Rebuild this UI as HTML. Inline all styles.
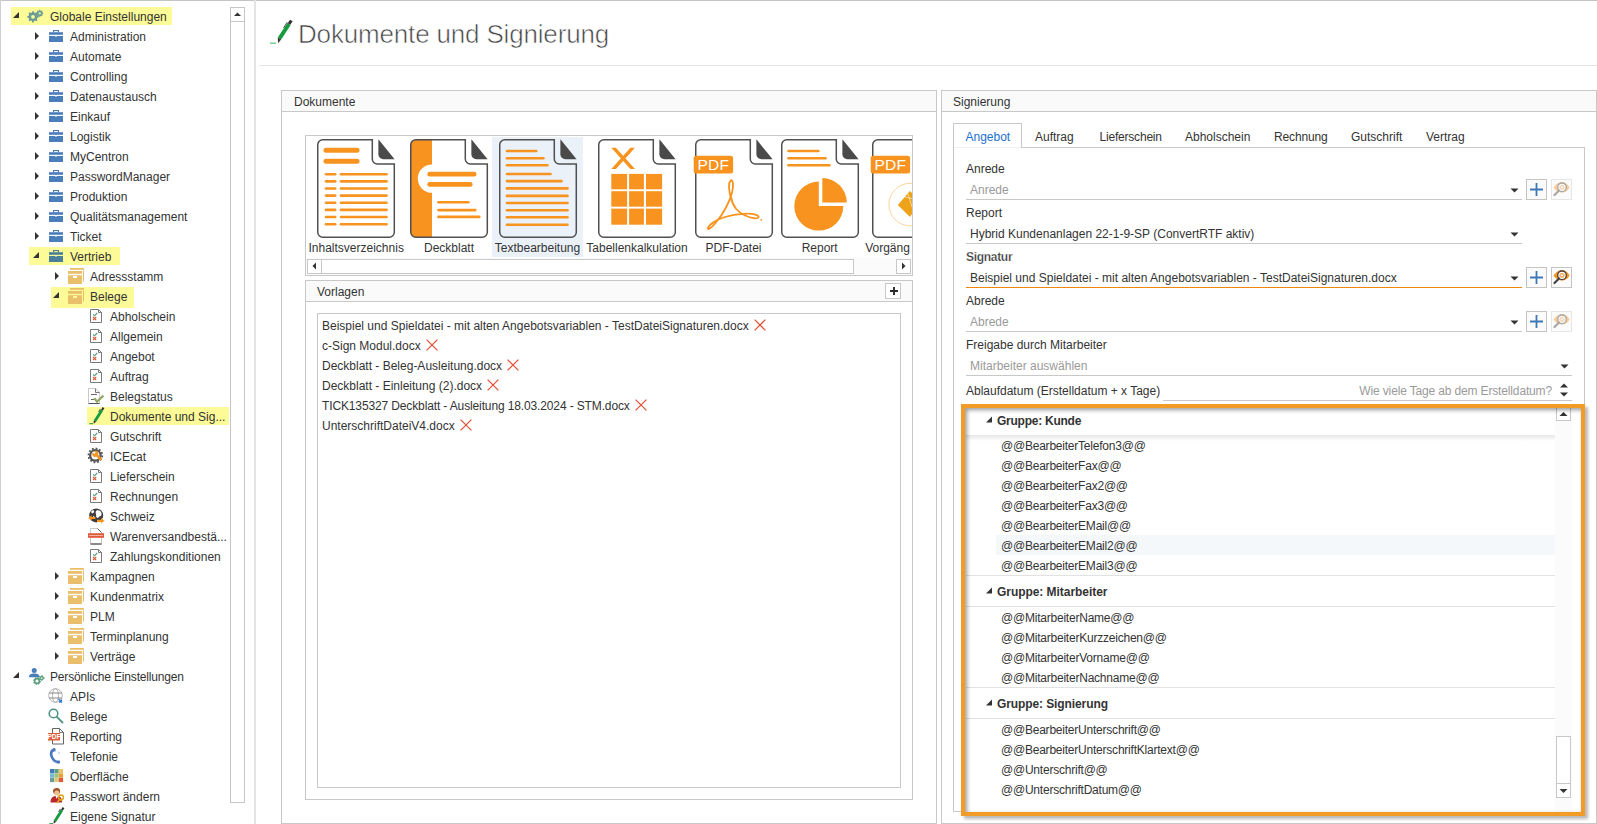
<!DOCTYPE html>
<html><head><meta charset="utf-8"><title>Dokumente und Signierung</title>
<style>
html,body{margin:0;padding:0;background:#fff;}
body{width:1597px;height:824px;overflow:hidden;position:relative;font-family:"Liberation Sans",sans-serif;}
.a{position:absolute;box-sizing:border-box;}
.t{position:absolute;white-space:pre;font-family:"Liberation Sans",sans-serif;}
svg.a{overflow:visible;}
</style></head><body>

<div class="a" style="left:0px;top:0px;width:1597px;height:1px;background:#c4c4c4"></div>
<div class="a" style="left:0px;top:0px;width:1px;height:824px;background:#cfcfcf"></div>
<div class="a" style="left:11px;top:7px;width:161px;height:18px;background:#fdfb97"></div>
<div class="a" style="left:29px;top:247px;width:91px;height:18px;background:#fdfb97"></div>
<div class="a" style="left:51px;top:287px;width:83px;height:21px;background:#fdfb97"></div>
<div class="a" style="left:87px;top:407px;width:142px;height:18px;background:#fdfb97"></div>
<div class="t " style="left:50px;top:10px;font-size:12px;line-height:14px;color:#333333;font-weight:normal;">Globale Einstellungen</div>
<svg class="a" style="left:27px;top:8px;" width="17" height="17" viewBox="0 0 17 17"><g fill="#6b9d95">
<path d="M5.3,3.2 L6.7,3.2 L7.1,4.6 L8.2,5.1 L9.5,4.3 L10.5,5.3 L9.8,6.6 L10.3,7.7 L11.7,8.1 L11.7,9.5 L10.3,9.9 L9.8,11 L10.5,12.3 L9.5,13.3 L8.2,12.5 L7.1,13 L6.7,14.4 L5.3,14.4 L4.9,13 L3.8,12.5 L2.5,13.3 L1.5,12.3 L2.2,11 L1.7,9.9 L0.3,9.5 L0.3,8.1 L1.7,7.7 L2.2,6.6 L1.5,5.3 L2.5,4.3 L3.8,5.1 L4.9,4.6 Z M6,6.9 A1.9,1.9 0 1 0 6,10.7 A1.9,1.9 0 1 0 6,6.9 Z" fill-rule="evenodd"/>
<path d="M12.3,1.8 L13.2,1.8 L13.5,2.7 L14.2,3 L15,2.5 L15.6,3.1 L15.2,3.9 L15.5,4.6 L16.3,4.9 L16.3,5.8 L15.5,6.1 L15.2,6.8 L15.6,7.6 L15,8.2 L14.2,7.8 L13.5,8.1 L13.2,8.9 L12.3,8.9 L12,8.1 L11.3,7.8 L10.5,8.2 L9.9,7.6 L10.3,6.8 L10,6.1 L9.2,5.8 L9.2,4.9 L10,4.6 L10.3,3.9 L9.9,3.1 L10.5,2.5 L11.3,3 L12,2.7 Z M12.75,4.2 A1.15,1.15 0 1 0 12.75,6.5 A1.15,1.15 0 1 0 12.75,4.2 Z" fill-rule="evenodd"/>
</g></svg>
<div class="t " style="left:70px;top:30px;font-size:12px;line-height:14px;color:#333333;font-weight:normal;">Administration</div>
<svg class="a" style="left:49px;top:30px;" width="14" height="12" viewBox="0 0 14 12"><g fill="#4a7ebb"><path d="M4,0 H10 V2.2 H8.8 V1.1 H5.2 V2.2 H4 Z"/><rect x="0" y="2.2" width="14" height="2.6"/><path d="M0,6 H6 L7,7 L8,6 H14 V12 H0 Z"/></g></svg>
<div class="t " style="left:70px;top:50px;font-size:12px;line-height:14px;color:#333333;font-weight:normal;">Automate</div>
<svg class="a" style="left:49px;top:50px;" width="14" height="12" viewBox="0 0 14 12"><g fill="#4a7ebb"><path d="M4,0 H10 V2.2 H8.8 V1.1 H5.2 V2.2 H4 Z"/><rect x="0" y="2.2" width="14" height="2.6"/><path d="M0,6 H6 L7,7 L8,6 H14 V12 H0 Z"/></g></svg>
<div class="t " style="left:70px;top:70px;font-size:12px;line-height:14px;color:#333333;font-weight:normal;">Controlling</div>
<svg class="a" style="left:49px;top:70px;" width="14" height="12" viewBox="0 0 14 12"><g fill="#4a7ebb"><path d="M4,0 H10 V2.2 H8.8 V1.1 H5.2 V2.2 H4 Z"/><rect x="0" y="2.2" width="14" height="2.6"/><path d="M0,6 H6 L7,7 L8,6 H14 V12 H0 Z"/></g></svg>
<div class="t " style="left:70px;top:90px;font-size:12px;line-height:14px;color:#333333;font-weight:normal;">Datenaustausch</div>
<svg class="a" style="left:49px;top:90px;" width="14" height="12" viewBox="0 0 14 12"><g fill="#4a7ebb"><path d="M4,0 H10 V2.2 H8.8 V1.1 H5.2 V2.2 H4 Z"/><rect x="0" y="2.2" width="14" height="2.6"/><path d="M0,6 H6 L7,7 L8,6 H14 V12 H0 Z"/></g></svg>
<div class="t " style="left:70px;top:110px;font-size:12px;line-height:14px;color:#333333;font-weight:normal;">Einkauf</div>
<svg class="a" style="left:49px;top:110px;" width="14" height="12" viewBox="0 0 14 12"><g fill="#4a7ebb"><path d="M4,0 H10 V2.2 H8.8 V1.1 H5.2 V2.2 H4 Z"/><rect x="0" y="2.2" width="14" height="2.6"/><path d="M0,6 H6 L7,7 L8,6 H14 V12 H0 Z"/></g></svg>
<div class="t " style="left:70px;top:130px;font-size:12px;line-height:14px;color:#333333;font-weight:normal;">Logistik</div>
<svg class="a" style="left:49px;top:130px;" width="14" height="12" viewBox="0 0 14 12"><g fill="#4a7ebb"><path d="M4,0 H10 V2.2 H8.8 V1.1 H5.2 V2.2 H4 Z"/><rect x="0" y="2.2" width="14" height="2.6"/><path d="M0,6 H6 L7,7 L8,6 H14 V12 H0 Z"/></g></svg>
<div class="t " style="left:70px;top:150px;font-size:12px;line-height:14px;color:#333333;font-weight:normal;">MyCentron</div>
<svg class="a" style="left:49px;top:150px;" width="14" height="12" viewBox="0 0 14 12"><g fill="#4a7ebb"><path d="M4,0 H10 V2.2 H8.8 V1.1 H5.2 V2.2 H4 Z"/><rect x="0" y="2.2" width="14" height="2.6"/><path d="M0,6 H6 L7,7 L8,6 H14 V12 H0 Z"/></g></svg>
<div class="t " style="left:70px;top:170px;font-size:12px;line-height:14px;color:#333333;font-weight:normal;">PasswordManager</div>
<svg class="a" style="left:49px;top:170px;" width="14" height="12" viewBox="0 0 14 12"><g fill="#4a7ebb"><path d="M4,0 H10 V2.2 H8.8 V1.1 H5.2 V2.2 H4 Z"/><rect x="0" y="2.2" width="14" height="2.6"/><path d="M0,6 H6 L7,7 L8,6 H14 V12 H0 Z"/></g></svg>
<div class="t " style="left:70px;top:190px;font-size:12px;line-height:14px;color:#333333;font-weight:normal;">Produktion</div>
<svg class="a" style="left:49px;top:190px;" width="14" height="12" viewBox="0 0 14 12"><g fill="#4a7ebb"><path d="M4,0 H10 V2.2 H8.8 V1.1 H5.2 V2.2 H4 Z"/><rect x="0" y="2.2" width="14" height="2.6"/><path d="M0,6 H6 L7,7 L8,6 H14 V12 H0 Z"/></g></svg>
<div class="t " style="left:70px;top:210px;font-size:12px;line-height:14px;color:#333333;font-weight:normal;">Qualitätsmanagement</div>
<svg class="a" style="left:49px;top:210px;" width="14" height="12" viewBox="0 0 14 12"><g fill="#4a7ebb"><path d="M4,0 H10 V2.2 H8.8 V1.1 H5.2 V2.2 H4 Z"/><rect x="0" y="2.2" width="14" height="2.6"/><path d="M0,6 H6 L7,7 L8,6 H14 V12 H0 Z"/></g></svg>
<div class="t " style="left:70px;top:230px;font-size:12px;line-height:14px;color:#333333;font-weight:normal;">Ticket</div>
<svg class="a" style="left:49px;top:230px;" width="14" height="12" viewBox="0 0 14 12"><g fill="#4a7ebb"><path d="M4,0 H10 V2.2 H8.8 V1.1 H5.2 V2.2 H4 Z"/><rect x="0" y="2.2" width="14" height="2.6"/><path d="M0,6 H6 L7,7 L8,6 H14 V12 H0 Z"/></g></svg>
<div class="t " style="left:70px;top:250px;font-size:12px;line-height:14px;color:#333333;font-weight:normal;">Vertrieb</div>
<svg class="a" style="left:49px;top:250px;" width="14" height="12" viewBox="0 0 14 12"><g fill="#4a7f9c"><path d="M4,0 H10 V2.2 H8.8 V1.1 H5.2 V2.2 H4 Z"/><rect x="0" y="2.2" width="14" height="2.6"/><path d="M0,6 H6 L7,7 L8,6 H14 V12 H0 Z"/></g></svg>
<div class="t " style="left:90px;top:270px;font-size:12px;line-height:14px;color:#333333;font-weight:normal;">Adressstamm</div>
<svg class="a" style="left:68px;top:268px;" width="17" height="17" viewBox="0 0 17 17"><g fill="#e9bf6b"><rect x="2" y="0" width="14" height="1.8"/><rect x="15" y="2.5" width="1" height="11"/><rect x="0" y="3" width="14" height="2.8"/><path d="M0,7.2 H14 V16 H0 Z M5,8.1 V10 H9 V8.1 Z" fill-rule="evenodd"/></g></svg>
<div class="t " style="left:90px;top:290px;font-size:12px;line-height:14px;color:#333333;font-weight:normal;">Belege</div>
<svg class="a" style="left:68px;top:288px;" width="17" height="17" viewBox="0 0 17 17"><g fill="#e9bf6b"><rect x="2" y="0" width="14" height="1.8"/><rect x="15" y="2.5" width="1" height="11"/><rect x="0" y="3" width="14" height="2.8"/><path d="M0,7.2 H14 V16 H0 Z M5,8.1 V10 H9 V8.1 Z" fill-rule="evenodd"/></g></svg>
<div class="t " style="left:110px;top:310px;font-size:12px;line-height:14px;color:#333333;font-weight:normal;">Abholschein</div>
<svg class="a" style="left:90px;top:309px;" width="12" height="14" viewBox="0 0 12 14"><path d="M0.5,0.5 H8.5 L11.5,3.5 V13.5 H0.5 Z" fill="#fff" stroke="#7a7a7a" stroke-width="1"/><path d="M8.5,0.5 V3.5 H11.5" fill="none" stroke="#7a7a7a" stroke-width="1"/>
<path d="M3,5.3 L4.5,6.8 L7.2,4" fill="none" stroke="#4f9a80" stroke-width="1.1"/><path d="M3,8 L6.2,11.2 M6.2,8 L3,11.2" stroke="#df5a3a" stroke-width="1.2"/></svg>
<div class="t " style="left:110px;top:330px;font-size:12px;line-height:14px;color:#333333;font-weight:normal;">Allgemein</div>
<svg class="a" style="left:90px;top:329px;" width="12" height="14" viewBox="0 0 12 14"><path d="M0.5,0.5 H8.5 L11.5,3.5 V13.5 H0.5 Z" fill="#fff" stroke="#7a7a7a" stroke-width="1"/><path d="M8.5,0.5 V3.5 H11.5" fill="none" stroke="#7a7a7a" stroke-width="1"/>
<path d="M3,5.3 L4.5,6.8 L7.2,4" fill="none" stroke="#4f9a80" stroke-width="1.1"/><path d="M3,8 L6.2,11.2 M6.2,8 L3,11.2" stroke="#df5a3a" stroke-width="1.2"/></svg>
<div class="t " style="left:110px;top:350px;font-size:12px;line-height:14px;color:#333333;font-weight:normal;">Angebot</div>
<svg class="a" style="left:90px;top:349px;" width="12" height="14" viewBox="0 0 12 14"><path d="M0.5,0.5 H8.5 L11.5,3.5 V13.5 H0.5 Z" fill="#fff" stroke="#7a7a7a" stroke-width="1"/><path d="M8.5,0.5 V3.5 H11.5" fill="none" stroke="#7a7a7a" stroke-width="1"/>
<path d="M3,5.3 L4.5,6.8 L7.2,4" fill="none" stroke="#4f9a80" stroke-width="1.1"/><path d="M3,8 L6.2,11.2 M6.2,8 L3,11.2" stroke="#df5a3a" stroke-width="1.2"/></svg>
<div class="t " style="left:110px;top:370px;font-size:12px;line-height:14px;color:#333333;font-weight:normal;">Auftrag</div>
<svg class="a" style="left:90px;top:369px;" width="12" height="14" viewBox="0 0 12 14"><path d="M0.5,0.5 H8.5 L11.5,3.5 V13.5 H0.5 Z" fill="#fff" stroke="#7a7a7a" stroke-width="1"/><path d="M8.5,0.5 V3.5 H11.5" fill="none" stroke="#7a7a7a" stroke-width="1"/>
<path d="M3,5.3 L4.5,6.8 L7.2,4" fill="none" stroke="#4f9a80" stroke-width="1.1"/><path d="M3,8 L6.2,11.2 M6.2,8 L3,11.2" stroke="#df5a3a" stroke-width="1.2"/></svg>
<div class="t " style="left:110px;top:390px;font-size:12px;line-height:14px;color:#333333;font-weight:normal;">Belegstatus</div>
<svg class="a" style="left:88px;top:388px;" width="16" height="16" viewBox="0 0 16 16"><path d="M0.5,0.5 H7.5 L11.5,4.5 V15.5 H0.5 Z" fill="#fff" stroke="#c8c8c8" stroke-width="1"/><path d="M7.5,0.5 V4.5 H11.5" fill="none" stroke="#555" stroke-width="0.8"/><path d="M0.5,15.5 H11.5" stroke="#555" stroke-width="1"/>
<path d="M3,6.5 H9 M3,11.5 H6" stroke="#666" stroke-width="1"/><path d="M6.3,10.3 L9,13.6 L15.5,7.6" fill="none" stroke="#93a865" stroke-width="2.2"/></svg>
<div class="t " style="left:110px;top:410px;font-size:12px;line-height:14px;color:#333333;font-weight:normal;">Dokumente und Sig...</div>
<svg class="a" style="left:88px;top:408px;" width="17" height="17" viewBox="0 0 17 17"><path d="M5.8,12.25 L8.2,13.75 L15.2,2.75 L12.8,1.25 Z" fill="#169b3f"/><path d="M13.1,1.4 L14.9,2.6 L16.4,0.3 L14.6,-0.9 Z" fill="#333"/><path d="M12.3,1 L10.6,3.9" stroke="#444" stroke-width="0.9"/><path d="M5.8,12.25 L8.2,13.75 L5.6,15.8 Z" fill="#333"/><rect x="1.4" y="15.1" width="3.6" height="1.1" fill="#22a04a"/></svg>
<div class="t " style="left:110px;top:430px;font-size:12px;line-height:14px;color:#333333;font-weight:normal;">Gutschrift</div>
<svg class="a" style="left:90px;top:429px;" width="12" height="14" viewBox="0 0 12 14"><path d="M0.5,0.5 H8.5 L11.5,3.5 V13.5 H0.5 Z" fill="#fff" stroke="#7a7a7a" stroke-width="1"/><path d="M8.5,0.5 V3.5 H11.5" fill="none" stroke="#7a7a7a" stroke-width="1"/>
<path d="M3,5.3 L4.5,6.8 L7.2,4" fill="none" stroke="#4f9a80" stroke-width="1.1"/><path d="M3,8 L6.2,11.2 M6.2,8 L3,11.2" stroke="#df5a3a" stroke-width="1.2"/></svg>
<div class="t " style="left:110px;top:450px;font-size:12px;line-height:14px;color:#333333;font-weight:normal;">ICEcat</div>
<svg class="a" style="left:87px;top:448px;" width="16" height="16" viewBox="0 0 16 16"><circle cx="8.4" cy="7.4" r="5.2" fill="#fff" stroke="#555" stroke-width="2.3"/><circle cx="8.4" cy="7.4" r="6.9" fill="none" stroke="#555" stroke-width="1.8" stroke-dasharray="1.8,1.81"/>
<path d="M5.6,4.6 A2.8,2.8 0 0 0 9.2,8.6 L13.4,12.8 L15.3,10.9 L11.1,6.7 A2.8,2.8 0 0 0 7.2,3.1 L8.7,4.6 L7.3,6.1 Z" fill="#f7931e"/></svg>
<div class="t " style="left:110px;top:470px;font-size:12px;line-height:14px;color:#333333;font-weight:normal;">Lieferschein</div>
<svg class="a" style="left:90px;top:469px;" width="12" height="14" viewBox="0 0 12 14"><path d="M0.5,0.5 H8.5 L11.5,3.5 V13.5 H0.5 Z" fill="#fff" stroke="#7a7a7a" stroke-width="1"/><path d="M8.5,0.5 V3.5 H11.5" fill="none" stroke="#7a7a7a" stroke-width="1"/>
<path d="M3,5.3 L4.5,6.8 L7.2,4" fill="none" stroke="#4f9a80" stroke-width="1.1"/><path d="M3,8 L6.2,11.2 M6.2,8 L3,11.2" stroke="#df5a3a" stroke-width="1.2"/></svg>
<div class="t " style="left:110px;top:490px;font-size:12px;line-height:14px;color:#333333;font-weight:normal;">Rechnungen</div>
<svg class="a" style="left:90px;top:489px;" width="12" height="14" viewBox="0 0 12 14"><path d="M0.5,0.5 H8.5 L11.5,3.5 V13.5 H0.5 Z" fill="#fff" stroke="#7a7a7a" stroke-width="1"/><path d="M8.5,0.5 V3.5 H11.5" fill="none" stroke="#7a7a7a" stroke-width="1"/>
<path d="M3,5.3 L4.5,6.8 L7.2,4" fill="none" stroke="#4f9a80" stroke-width="1.1"/><path d="M3,8 L6.2,11.2 M6.2,8 L3,11.2" stroke="#df5a3a" stroke-width="1.2"/></svg>
<div class="t " style="left:110px;top:510px;font-size:12px;line-height:14px;color:#333333;font-weight:normal;">Schweiz</div>
<svg class="a" style="left:88px;top:508px;" width="17" height="17" viewBox="0 0 17 17"><circle cx="8.2" cy="7.4" r="7" fill="#3d3d3d"/><path d="M3.2,3.6 C4,2 6,1.6 6.2,3.2 C6.3,4.6 4.6,5.6 3.6,5.2 Z M8.6,2.6 C10.5,1.8 13,3 13.6,5.4 C13.8,7.4 12.6,8.2 11.4,8.6 C10.6,9.6 9.6,10.4 8.6,9.6 C7.8,8.4 8.4,7.4 8,6.2 C7.4,4.8 7.6,3.2 8.6,2.6 Z M5,8 C6,7.6 6.8,8.6 6.4,9.6 L5.4,10 Z" fill="#fff"/>
<path d="M0.3,10 L3.6,7.2 V8.9 H7.4 V11.1 H3.6 V12.8 Z" fill="#f7931e"/><path d="M16.4,12.8 L13.1,10 V11.7 H9 V13.9 H13.1 V15.6 Z" fill="#f7931e"/></svg>
<div class="t " style="left:110px;top:530px;font-size:12px;line-height:14px;color:#333333;font-weight:normal;">Warenversandbestä...</div>
<svg class="a" style="left:88px;top:528px;" width="16" height="17" viewBox="0 0 16 17"><path d="M2.5,0.5 H9.5 L13.5,4.5 V16 H2.5 Z" fill="#fff" stroke="#c8c8c8" stroke-width="1"/><path d="M9.5,0.5 L13.5,4.5" stroke="#444" stroke-width="0.8"/><path d="M2.5,16 H13.5" stroke="#333" stroke-width="1"/><rect x="0" y="5.2" width="16" height="4.6" fill="#e05b3b"/><path d="M1.5,7.5 H14.5" stroke="#fff" stroke-width="0.9" stroke-dasharray="1.2,0.8"/></svg>
<div class="t " style="left:110px;top:550px;font-size:12px;line-height:14px;color:#333333;font-weight:normal;">Zahlungskonditionen</div>
<svg class="a" style="left:90px;top:549px;" width="12" height="14" viewBox="0 0 12 14"><path d="M0.5,0.5 H8.5 L11.5,3.5 V13.5 H0.5 Z" fill="#fff" stroke="#7a7a7a" stroke-width="1"/><path d="M8.5,0.5 V3.5 H11.5" fill="none" stroke="#7a7a7a" stroke-width="1"/>
<path d="M3,5.3 L4.5,6.8 L7.2,4" fill="none" stroke="#4f9a80" stroke-width="1.1"/><path d="M3,8 L6.2,11.2 M6.2,8 L3,11.2" stroke="#df5a3a" stroke-width="1.2"/></svg>
<div class="t " style="left:90px;top:570px;font-size:12px;line-height:14px;color:#333333;font-weight:normal;">Kampagnen</div>
<svg class="a" style="left:68px;top:568px;" width="17" height="17" viewBox="0 0 17 17"><g fill="#e9bf6b"><rect x="2" y="0" width="14" height="1.8"/><rect x="15" y="2.5" width="1" height="11"/><rect x="0" y="3" width="14" height="2.8"/><path d="M0,7.2 H14 V16 H0 Z M5,8.1 V10 H9 V8.1 Z" fill-rule="evenodd"/></g></svg>
<div class="t " style="left:90px;top:590px;font-size:12px;line-height:14px;color:#333333;font-weight:normal;">Kundenmatrix</div>
<svg class="a" style="left:68px;top:588px;" width="17" height="17" viewBox="0 0 17 17"><g fill="#e9bf6b"><rect x="2" y="0" width="14" height="1.8"/><rect x="15" y="2.5" width="1" height="11"/><rect x="0" y="3" width="14" height="2.8"/><path d="M0,7.2 H14 V16 H0 Z M5,8.1 V10 H9 V8.1 Z" fill-rule="evenodd"/></g></svg>
<div class="t " style="left:90px;top:610px;font-size:12px;line-height:14px;color:#333333;font-weight:normal;">PLM</div>
<svg class="a" style="left:68px;top:608px;" width="17" height="17" viewBox="0 0 17 17"><g fill="#e9bf6b"><rect x="2" y="0" width="14" height="1.8"/><rect x="15" y="2.5" width="1" height="11"/><rect x="0" y="3" width="14" height="2.8"/><path d="M0,7.2 H14 V16 H0 Z M5,8.1 V10 H9 V8.1 Z" fill-rule="evenodd"/></g></svg>
<div class="t " style="left:90px;top:630px;font-size:12px;line-height:14px;color:#333333;font-weight:normal;">Terminplanung</div>
<svg class="a" style="left:68px;top:628px;" width="17" height="17" viewBox="0 0 17 17"><g fill="#e9bf6b"><rect x="2" y="0" width="14" height="1.8"/><rect x="15" y="2.5" width="1" height="11"/><rect x="0" y="3" width="14" height="2.8"/><path d="M0,7.2 H14 V16 H0 Z M5,8.1 V10 H9 V8.1 Z" fill-rule="evenodd"/></g></svg>
<div class="t " style="left:90px;top:650px;font-size:12px;line-height:14px;color:#333333;font-weight:normal;">Verträge</div>
<svg class="a" style="left:68px;top:648px;" width="17" height="17" viewBox="0 0 17 17"><g fill="#e9bf6b"><rect x="2" y="0" width="14" height="1.8"/><rect x="15" y="2.5" width="1" height="11"/><rect x="0" y="3" width="14" height="2.8"/><path d="M0,7.2 H14 V16 H0 Z M5,8.1 V10 H9 V8.1 Z" fill-rule="evenodd"/></g></svg>
<div class="t " style="left:50px;top:670px;font-size:12px;line-height:14px;color:#333333;font-weight:normal;letter-spacing:-0.17px;">Persönliche Einstellungen</div>
<svg class="a" style="left:28px;top:668px;" width="17" height="17" viewBox="0 0 17 17"><circle cx="6.2" cy="2.6" r="2.5" fill="#4a7ebb"/><path d="M1,9.2 C1,6.4 3,5.6 6.2,5.6 C9.4,5.6 11.4,6.4 11.4,9.2 Z" fill="#4a7ebb"/>
<circle cx="9" cy="13" r="2.4" fill="#fff" stroke="#5a9e7a" stroke-width="1.6"/><circle cx="9" cy="13" r="3.3" fill="none" stroke="#5a9e7a" stroke-width="1.3" stroke-dasharray="1.3,1.29"/>
<circle cx="13.6" cy="10" r="1.5" fill="#fff" stroke="#5a9e7a" stroke-width="1.3"/><circle cx="13.6" cy="10" r="2.3" fill="none" stroke="#5a9e7a" stroke-width="1.1" stroke-dasharray="1.2,1.21"/></svg>
<div class="t " style="left:70px;top:690px;font-size:12px;line-height:14px;color:#333333;font-weight:normal;">APIs</div>
<svg class="a" style="left:48px;top:688px;" width="16" height="16" viewBox="0 0 16 16"><circle cx="7.5" cy="7.5" r="6.8" fill="none" stroke="#aaa" stroke-width="0.9"/><ellipse cx="7.5" cy="7.5" rx="3" ry="6.8" fill="none" stroke="#aaa" stroke-width="0.9"/><path d="M1,5 H14 M1,10 H14" stroke="#888" stroke-width="1"/><path d="M10.5,11 L13.5,13.8 M13.5,11.5 V14 H11" stroke="#3a7fcf" stroke-width="1.3" fill="none"/></svg>
<div class="t " style="left:70px;top:710px;font-size:12px;line-height:14px;color:#333333;font-weight:normal;">Belege</div>
<svg class="a" style="left:48px;top:708px;" width="16" height="16" viewBox="0 0 16 16"><circle cx="5.5" cy="5.5" r="4.3" fill="none" stroke="#4e9384" stroke-width="1.6"/><path d="M8.6,8.6 L15,15" stroke="#4e9384" stroke-width="1.8"/></svg>
<div class="t " style="left:70px;top:730px;font-size:12px;line-height:14px;color:#333333;font-weight:normal;">Reporting</div>
<svg class="a" style="left:48px;top:728px;" width="16" height="17" viewBox="0 0 16 17"><path d="M4.5,0.5 H11.5 L15.5,4.5 V16 H4.5 Z" fill="#fff" stroke="#555" stroke-width="0.9"/><path d="M11.5,0.5 V4.5 H15.5" fill="none" stroke="#555" stroke-width="0.8"/><rect x="0" y="5" width="12" height="7.5" fill="#e05b3b"/><text x="6" y="11" font-size="6.5" font-family="Liberation Sans" fill="#fff" text-anchor="middle" font-weight="bold">PDF</text></svg>
<div class="t " style="left:70px;top:750px;font-size:12px;line-height:14px;color:#333333;font-weight:normal;">Telefonie</div>
<svg class="a" style="left:50px;top:748px;" width="12" height="16" viewBox="0 0 12 16"><path d="M4.3,1.6 C1.4,2.6 0.6,5.4 1.6,8.4 C2.6,11.4 5.2,13.8 8.6,14.2" fill="none" stroke="#4a78c0" stroke-width="2.6" stroke-linecap="round"/><path d="M2.6,0.4 L5.2,0.6 L5.4,3.4 L3,3.6 Z M7.4,12.4 L9.8,12.6 L10,15.2 L7.6,15.4 Z" fill="#4a78c0"/><path d="M8.4,3.8 L9.4,5 L8.4,6.2" fill="none" stroke="#8ab0dd" stroke-width="0.8"/></svg>
<div class="t " style="left:70px;top:770px;font-size:12px;line-height:14px;color:#333333;font-weight:normal;">Oberfläche</div>
<svg class="a" style="left:50px;top:769px;" width="14" height="14" viewBox="0 0 14 14"><rect x="0" y="0" width="4.3" height="4.3" fill="#3f7bbd"/><rect x="4.4" y="0" width="4.3" height="4.3" fill="#5f9e8a"/><rect x="8.8" y="0" width="4.3" height="4.3" fill="#e9c46a"/>
<rect x="0" y="4.4" width="4.3" height="4.3" fill="#7ab8d6"/><rect x="4.4" y="4.4" width="4.3" height="4.3" fill="#9dc47c"/><rect x="8.8" y="4.4" width="4.3" height="4.3" fill="#e9a03a"/>
<rect x="0" y="8.8" width="4.3" height="4.3" fill="#6b9e96"/><rect x="4.4" y="8.8" width="4.3" height="4.3" fill="#d9cc7a"/><rect x="8.8" y="8.8" width="4.3" height="4.3" fill="#e05a3a"/></svg>
<div class="t " style="left:70px;top:790px;font-size:12px;line-height:14px;color:#333333;font-weight:normal;">Passwort ändern</div>
<svg class="a" style="left:50px;top:788px;" width="15" height="16" viewBox="0 0 15 16"><path d="M3,3.5 C3,0.5 5,0 7,0 C9.5,0 10.5,2 10,4.5 L9,6 H4 Z" fill="#a0562a"/><circle cx="6.8" cy="5" r="2.6" fill="#f0c090"/><path d="M0.5,14.5 C0.5,9.5 3,8 6.8,8 C10,8 12,9.5 12,14.5 Z" fill="#b8252a"/><path d="M5.5,8 L6.8,11 L8,8 Z" fill="#fff"/>
<circle cx="11" cy="9.5" r="2.4" fill="none" stroke="#e0a820" stroke-width="1.5"/><path d="M9.8,11.5 L6.5,15 M7.5,13.8 L8.5,14.8" stroke="#e0a820" stroke-width="1.5"/></svg>
<div class="t " style="left:70px;top:810px;font-size:12px;line-height:14px;color:#333333;font-weight:normal;">Eigene Signatur</div>
<svg class="a" style="left:48px;top:808px;" width="17" height="17" viewBox="0 0 17 17"><path d="M5.8,12.25 L8.2,13.75 L15.2,2.75 L12.8,1.25 Z" fill="#169b3f"/><path d="M13.1,1.4 L14.9,2.6 L16.4,0.3 L14.6,-0.9 Z" fill="#333"/><path d="M12.3,1 L10.6,3.9" stroke="#444" stroke-width="0.9"/><path d="M5.8,12.25 L8.2,13.75 L5.6,15.8 Z" fill="#333"/><rect x="1.4" y="15.1" width="3.6" height="1.1" fill="#22a04a"/></svg>
<svg class="a" style="left:0px;top:0px;" width="260" height="824" viewBox="0 0 260 824"><polygon points="19,12 19,18 13,18" fill="#333"/><polygon points="35,32 39,36 35,40" fill="#333"/><polygon points="35,52 39,56 35,60" fill="#333"/><polygon points="35,72 39,76 35,80" fill="#333"/><polygon points="35,92 39,96 35,100" fill="#333"/><polygon points="35,112 39,116 35,120" fill="#333"/><polygon points="35,132 39,136 35,140" fill="#333"/><polygon points="35,152 39,156 35,160" fill="#333"/><polygon points="35,172 39,176 35,180" fill="#333"/><polygon points="35,192 39,196 35,200" fill="#333"/><polygon points="35,212 39,216 35,220" fill="#333"/><polygon points="35,232 39,236 35,240" fill="#333"/><polygon points="39,252 39,258 33,258" fill="#333"/><polygon points="55,272 59,276 55,280" fill="#333"/><polygon points="59,292 59,298 53,298" fill="#333"/><polygon points="55,572 59,576 55,580" fill="#333"/><polygon points="55,592 59,596 55,600" fill="#333"/><polygon points="55,612 59,616 55,620" fill="#333"/><polygon points="55,632 59,636 55,640" fill="#333"/><polygon points="55,652 59,656 55,660" fill="#333"/><polygon points="19,672 19,678 13,678" fill="#333"/></svg>
<div class="a" style="left:230px;top:7px;width:15px;height:796px;border:1px solid #c6c6c6;background:#fff"></div>
<div class="a" style="left:230px;top:21px;width:15px;height:1px;background:#c6c6c6"></div>
<svg class="a" style="left:230px;top:7px;" width="15" height="15" viewBox="0 0 15 15"><polygon points="4,9 11,9 7.5,5.5" fill="#333"/></svg>
<div class="a" style="left:254px;top:0px;width:2px;height:824px;background:#e4e4e4"></div>
<svg class="a" style="left:268px;top:18px" width="26" height="28" viewBox="0 0 26 28">
<path d="M9.8,19.4 L13.2,21.6 L22.7,7.1 L19.3,4.9 Z" fill="#169b3f"/>
<path d="M19.7,5.2 L22.3,6.8 L24.6,3.3 L22,1.7 Z" fill="#333"/>
<path d="M19.2,4.2 L15.6,9.8" stroke="#555" stroke-width="1"/>
<path d="M9.8,19.4 L13.2,21.6 L10,25.2 Z" fill="#3a3a3a"/>
<rect x="2" y="24.6" width="6" height="1.1" fill="#4cbb6c"/>
</svg>
<div class="t " style="left:298px;top:19px;font-size:26px;line-height:30px;color:#454545;font-weight:normal;letter-spacing:-0.17px;-webkit-text-stroke:0.6px #fff;">Dokumente und Signierung</div>
<div class="a" style="left:259px;top:65px;width:1338px;height:1px;background:#e5e5e5"></div>
<div class="a" style="left:281px;top:90px;width:656px;height:734px;border:1px solid #c8c8c8;background:#fff"></div>
<div class="a" style="left:282px;top:91px;width:654px;height:20px;background:#fafafa"></div>
<div class="a" style="left:282px;top:111px;width:654px;height:1px;background:#c8c8c8"></div>
<div class="t " style="left:294px;top:95px;font-size:12px;line-height:14px;color:#333;font-weight:normal;">Dokumente</div>
<div class="a" style="left:305px;top:135px;width:608px;height:141px;border:1px solid #c8c8c8;background:#fff"></div>
<div class="a" style="left:492px;top:137px;width:91px;height:120px;background:#eaf1f9"></div>
<div class="a" style="left:306px;top:136px;width:606px;height:122px;overflow:hidden">
<svg class="a" style="left:11.199999999999989px;top:3px;overflow:visible" width="78" height="99" viewBox="0 0 78 99"><path d="M5.75,0.75 H55.3 V19.9 A5,5 0 0 0 60.3,24.9 H77.3 V93.3 A5,5 0 0 1 72.3,98.3 H5.75 A5,5 0 0 1 0.75,93.3 V5.75 A5,5 0 0 1 5.75,0.75 Z" fill="#fff"/><path d="M9,11.2 H40" stroke="#f7931e" stroke-width="5" stroke-linecap="round"/><path d="M9,22.2 H40" stroke="#f7931e" stroke-width="5" stroke-linecap="round"/><path d="M9,35.2 H18.2" stroke="#f7931e" stroke-width="2.6" stroke-linecap="round"/><path d="M24,35.2 H69.5" stroke="#f7931e" stroke-width="2.6" stroke-linecap="round"/><path d="M9,42.34 H18.2" stroke="#f7931e" stroke-width="2.6" stroke-linecap="round"/><path d="M24,42.34 H69.5" stroke="#f7931e" stroke-width="2.6" stroke-linecap="round"/><path d="M9,49.480000000000004 H18.2" stroke="#f7931e" stroke-width="2.6" stroke-linecap="round"/><path d="M24,49.480000000000004 H69.5" stroke="#f7931e" stroke-width="2.6" stroke-linecap="round"/><path d="M9,56.620000000000005 H18.2" stroke="#f7931e" stroke-width="2.6" stroke-linecap="round"/><path d="M24,56.620000000000005 H69.5" stroke="#f7931e" stroke-width="2.6" stroke-linecap="round"/><path d="M9,63.760000000000005 H18.2" stroke="#f7931e" stroke-width="2.6" stroke-linecap="round"/><path d="M24,63.760000000000005 H69.5" stroke="#f7931e" stroke-width="2.6" stroke-linecap="round"/><path d="M9,70.9 H18.2" stroke="#f7931e" stroke-width="2.6" stroke-linecap="round"/><path d="M24,70.9 H69.5" stroke="#f7931e" stroke-width="2.6" stroke-linecap="round"/><path d="M9,78.03999999999999 H18.2" stroke="#f7931e" stroke-width="2.6" stroke-linecap="round"/><path d="M24,78.03999999999999 H69.5" stroke="#f7931e" stroke-width="2.6" stroke-linecap="round"/><path d="M9,85.18 H18.2" stroke="#f7931e" stroke-width="2.6" stroke-linecap="round"/><path d="M24,85.18 H69.5" stroke="#f7931e" stroke-width="2.6" stroke-linecap="round"/><path d="M5.75,0.75 H55.3 V19.9 A5,5 0 0 0 60.3,24.9 H77.3 V93.3 A5,5 0 0 1 72.3,98.3 H5.75 A5,5 0 0 1 0.75,93.3 V5.75 A5,5 0 0 1 5.75,0.75 Z" fill="none" stroke="#505050" stroke-width="1.5"/><path d="M61.4,0.3 L77.6,20.3 H66.4 A5,5 0 0 1 61.4,15.3 Z" fill="#4a4a4a"/></svg>
<svg class="a" style="left:104.0px;top:3px;overflow:visible" width="78" height="99" viewBox="0 0 78 99"><path d="M5.75,0.75 H55.3 V19.9 A5,5 0 0 0 60.3,24.9 H77.3 V93.3 A5,5 0 0 1 72.3,98.3 H5.75 A5,5 0 0 1 0.75,93.3 V5.75 A5,5 0 0 1 5.75,0.75 Z" fill="#fff"/><clipPath id="dclip"><path d="M5.75,0.75 H55.3 V19.9 A5,5 0 0 0 60.3,24.9 H77.3 V93.3 A5,5 0 0 1 72.3,98.3 H5.75 A5,5 0 0 1 0.75,93.3 V5.75 A5,5 0 0 1 5.75,0.75 Z"/></clipPath><g clip-path="url(#dclip)"><path d="M0,0 H22 V25.4 A14.2,14.2 0 0 0 22,53.8 V99 H0 Z" fill="#f7931e"/></g><path d="M19.7,35.2 H64.1" stroke="#f7931e" stroke-width="4.8" stroke-linecap="round"/><path d="M19.7,45.4 H60.2" stroke="#f7931e" stroke-width="4.8" stroke-linecap="round"/><path d="M28.4,63.3 H58.4" stroke="#f7931e" stroke-width="2.6" stroke-linecap="round"/><path d="M28.4,71.1 H65.3" stroke="#f7931e" stroke-width="2.6" stroke-linecap="round"/><path d="M28.4,77.9 H69.3" stroke="#f7931e" stroke-width="2.6" stroke-linecap="round"/><path d="M5.75,0.75 H55.3 V19.9 A5,5 0 0 0 60.3,24.9 H77.3 V93.3 A5,5 0 0 1 72.3,98.3 H5.75 A5,5 0 0 1 0.75,93.3 V5.75 A5,5 0 0 1 5.75,0.75 Z" fill="none" stroke="#505050" stroke-width="1.5"/><path d="M61.4,0.3 L77.6,20.3 H66.4 A5,5 0 0 1 61.4,15.3 Z" fill="#4a4a4a"/></svg>
<svg class="a" style="left:192.5px;top:3px;overflow:visible" width="78" height="99" viewBox="0 0 78 99"><path d="M5.75,0.75 H55.3 V19.9 A5,5 0 0 0 60.3,24.9 H77.3 V93.3 A5,5 0 0 1 72.3,98.3 H5.75 A5,5 0 0 1 0.75,93.3 V5.75 A5,5 0 0 1 5.75,0.75 Z" fill="#eaf1f9"/><path d="M7.9,12 H37.300000000000004" stroke="#f7931e" stroke-width="2.6" stroke-linecap="round"/><path d="M7.9,19.2 H44.400000000000006" stroke="#f7931e" stroke-width="2.6" stroke-linecap="round"/><path d="M7.9,26.3 H48.400000000000006" stroke="#f7931e" stroke-width="2.6" stroke-linecap="round"/><path d="M7.9,35 H51.5" stroke="#f7931e" stroke-width="2.6" stroke-linecap="round"/><path d="M7.9,42.1 H62.6" stroke="#f7931e" stroke-width="2.6" stroke-linecap="round"/><path d="M7.9,49.4 H68.5" stroke="#f7931e" stroke-width="2.6" stroke-linecap="round"/><path d="M7.9,56.9 H68.5" stroke="#f7931e" stroke-width="2.6" stroke-linecap="round"/><path d="M7.9,64 H68.5" stroke="#f7931e" stroke-width="2.6" stroke-linecap="round"/><path d="M7.9,71.3 H68.5" stroke="#f7931e" stroke-width="2.6" stroke-linecap="round"/><path d="M7.9,78.2 H68.5" stroke="#f7931e" stroke-width="2.6" stroke-linecap="round"/><path d="M7.9,85.8 H68.5" stroke="#f7931e" stroke-width="2.6" stroke-linecap="round"/><path d="M5.75,0.75 H55.3 V19.9 A5,5 0 0 0 60.3,24.9 H77.3 V93.3 A5,5 0 0 1 72.3,98.3 H5.75 A5,5 0 0 1 0.75,93.3 V5.75 A5,5 0 0 1 5.75,0.75 Z" fill="none" stroke="#505050" stroke-width="1.5"/><path d="M61.4,0.3 L77.6,20.3 H66.4 A5,5 0 0 1 61.4,15.3 Z" fill="#4a4a4a"/></svg>
<svg class="a" style="left:292px;top:3px;overflow:visible" width="78" height="99" viewBox="0 0 78 99"><path d="M5.75,0.75 H55.3 V19.9 A5,5 0 0 0 60.3,24.9 H77.3 V93.3 A5,5 0 0 1 72.3,98.3 H5.75 A5,5 0 0 1 0.75,93.3 V5.75 A5,5 0 0 1 5.75,0.75 Z" fill="#fff"/><path d="M13.3,8.8 H17.9 L37,30.1 H32.4 Z M32.4,8.8 H37 L17.9,30.1 H13.3 Z" fill="#f7931e"/><rect x="13.3" y="34.9" width="15.8" height="15.4" fill="#f7931e"/><rect x="13.3" y="52.2" width="15.8" height="15.5" fill="#f7931e"/><rect x="13.3" y="69.6" width="15.8" height="16.1" fill="#f7931e"/><rect x="31.1" y="34.9" width="14.8" height="15.4" fill="#f7931e"/><rect x="31.1" y="52.2" width="14.8" height="15.5" fill="#f7931e"/><rect x="31.1" y="69.6" width="14.8" height="16.1" fill="#f7931e"/><rect x="48" y="34.9" width="16.1" height="15.4" fill="#f7931e"/><rect x="48" y="52.2" width="16.1" height="15.5" fill="#f7931e"/><rect x="48" y="69.6" width="16.1" height="16.1" fill="#f7931e"/><path d="M5.75,0.75 H55.3 V19.9 A5,5 0 0 0 60.3,24.9 H77.3 V93.3 A5,5 0 0 1 72.3,98.3 H5.75 A5,5 0 0 1 0.75,93.3 V5.75 A5,5 0 0 1 5.75,0.75 Z" fill="none" stroke="#505050" stroke-width="1.5"/><path d="M61.4,0.3 L77.6,20.3 H66.4 A5,5 0 0 1 61.4,15.3 Z" fill="#4a4a4a"/></svg>
<svg class="a" style="left:388.5px;top:3px;overflow:visible" width="78" height="99" viewBox="0 0 78 99"><path d="M5.75,0.75 H55.3 V19.9 A5,5 0 0 0 60.3,24.9 H77.3 V93.3 A5,5 0 0 1 72.3,98.3 H5.75 A5,5 0 0 1 0.75,93.3 V5.75 A5,5 0 0 1 5.75,0.75 Z" fill="#fff"/><path d="M5.75,0.75 H55.3 V19.9 A5,5 0 0 0 60.3,24.9 H77.3 V93.3 A5,5 0 0 1 72.3,98.3 H5.75 A5,5 0 0 1 0.75,93.3 V5.75 A5,5 0 0 1 5.75,0.75 Z" fill="none" stroke="#505050" stroke-width="1.5"/><path d="M61.4,0.3 L77.6,20.3 H66.4 A5,5 0 0 1 61.4,15.3 Z" fill="#4a4a4a"/><rect x="-1.3" y="16.7" width="39.4" height="17.8" rx="2.5" fill="#f7931e"/><text x="18.4" y="31.3" font-family="Liberation Sans" font-size="15.5" fill="#fff" text-anchor="middle" letter-spacing="0.3">PDF</text><g fill="none" stroke="#f7931e" stroke-width="1.8" stroke-linejoin="round" stroke-linecap="round">
<path d="M36,60 C34,52 33.2,44 35.5,41.6 C38,39.8 38.8,46 37.2,53 C35,62 28.5,75 20.5,84 C16.5,88.8 12.2,91.8 13,89 C14,86 20,81 30,78 C42,74.5 55,73.8 61.2,75.8 C65.2,77.2 64.2,80.2 58.6,79.2 C52,78 46,75 41.2,70 C38.2,66 36.6,62 36,58"/>
</g><circle cx="66.2" cy="80.8" r="0.9" fill="#f7931e"/></svg>
<svg class="a" style="left:474.70000000000005px;top:3px;overflow:visible" width="78" height="99" viewBox="0 0 78 99"><path d="M5.75,0.75 H55.3 V19.9 A5,5 0 0 0 60.3,24.9 H77.3 V93.3 A5,5 0 0 1 72.3,98.3 H5.75 A5,5 0 0 1 0.75,93.3 V5.75 A5,5 0 0 1 5.75,0.75 Z" fill="#fff"/><path d="M7.5,12 H37.4" stroke="#f7931e" stroke-width="2.6" stroke-linecap="round"/><path d="M7.5,19.2 H44.5" stroke="#f7931e" stroke-width="2.6" stroke-linecap="round"/><path d="M7.5,26.3 H48.4" stroke="#f7931e" stroke-width="2.6" stroke-linecap="round"/><path d="M37.8,67.1 V42.6 A24.5,24.5 0 1 0 62.3,67.1 Z" fill="#f7931e"/><path d="M41.3,63.6 V39.1 A24.5,24.5 0 0 1 65.8,63.6 Z" fill="#f7931e"/><path d="M5.75,0.75 H55.3 V19.9 A5,5 0 0 0 60.3,24.9 H77.3 V93.3 A5,5 0 0 1 72.3,98.3 H5.75 A5,5 0 0 1 0.75,93.3 V5.75 A5,5 0 0 1 5.75,0.75 Z" fill="none" stroke="#505050" stroke-width="1.5"/><path d="M61.4,0.3 L77.6,20.3 H66.4 A5,5 0 0 1 61.4,15.3 Z" fill="#4a4a4a"/></svg>
<svg class="a" style="left:566.2px;top:3px;overflow:visible" width="78" height="99" viewBox="0 0 78 99"><path d="M5.75,0.75 H55.3 V19.9 A5,5 0 0 0 60.3,24.9 H77.3 V93.3 A5,5 0 0 1 72.3,98.3 H5.75 A5,5 0 0 1 0.75,93.3 V5.75 A5,5 0 0 1 5.75,0.75 Z" fill="#fff"/><path d="M5.75,0.75 H55.3 V19.9 A5,5 0 0 0 60.3,24.9 H77.3 V93.3 A5,5 0 0 1 72.3,98.3 H5.75 A5,5 0 0 1 0.75,93.3 V5.75 A5,5 0 0 1 5.75,0.75 Z" fill="none" stroke="#505050" stroke-width="1.5"/><path d="M61.4,0.3 L77.6,20.3 H66.4 A5,5 0 0 1 61.4,15.3 Z" fill="#4a4a4a"/><rect x="-1.3" y="16.7" width="39.4" height="17.8" rx="2.5" fill="#f7931e"/><text x="18.4" y="31.3" font-family="Liberation Sans" font-size="15.5" fill="#fff" text-anchor="middle" letter-spacing="0.3">PDF</text><circle cx="38.2" cy="65.6" r="21.3" fill="none" stroke="#f9cf95" stroke-width="0.9"/><path d="M25.8,66.1 L38,52 L48,62 L38,78 Z" fill="#eea21a"/><path d="M33,58 L42,60 M36,55 L40,68" stroke="#fff" stroke-width="0.6"/></svg>
<div class="t" style="left:-9.800000000000011px;width:120px;text-align:center;top:105px;font-size:12px;line-height:14px;color:#333">Inhaltsverzeichnis</div>
<div class="t" style="left:83.0px;width:120px;text-align:center;top:105px;font-size:12px;line-height:14px;color:#333">Deckblatt</div>
<div class="t" style="left:171.5px;width:120px;text-align:center;top:105px;font-size:12px;line-height:14px;color:#333">Textbearbeitung</div>
<div class="t" style="left:271px;width:120px;text-align:center;top:105px;font-size:12px;line-height:14px;color:#333">Tabellenkalkulation</div>
<div class="t" style="left:367.5px;width:120px;text-align:center;top:105px;font-size:12px;line-height:14px;color:#333">PDF-Datei</div>
<div class="t" style="left:453.70000000000005px;width:120px;text-align:center;top:105px;font-size:12px;line-height:14px;color:#333">Report</div>
<div class="t" style="left:559.2px;top:105px;width:45px;overflow:hidden;font-size:12px;line-height:14px;color:#333">Vorgänge</div>
</div>
<div class="a" style="left:306px;top:258px;width:606px;height:17px;background:#fbfbfb"></div>
<div class="a" style="left:307px;top:259px;width:15px;height:15px;border:1px solid #c8c8c8;background:#fff"></div>
<div class="a" style="left:321px;top:259px;width:533px;height:15px;border:1px solid #c8c8c8;background:#fff"></div>
<div class="a" style="left:896px;top:259px;width:15px;height:15px;border:1px solid #c8c8c8;background:#fff"></div>
<svg class="a" style="left:307px;top:259px;" width="15" height="15" viewBox="0 0 15 15"><polygon points="9,3.5 9,10.5 5.5,7" fill="#333"/></svg>
<svg class="a" style="left:896px;top:259px;" width="15" height="15" viewBox="0 0 15 15"><polygon points="6,3.5 6,10.5 9.5,7" fill="#333"/></svg>
<div class="a" style="left:305px;top:280px;width:608px;height:520px;border:1px solid #c8c8c8;background:#fff"></div>
<div class="a" style="left:306px;top:281px;width:606px;height:20px;background:#fafafa"></div>
<div class="a" style="left:306px;top:301px;width:606px;height:1px;background:#c8c8c8"></div>
<div class="t " style="left:317px;top:285px;font-size:12px;line-height:14px;color:#333;font-weight:normal;">Vorlagen</div>
<div class="a" style="left:885px;top:283px;width:16px;height:16px;border:1px solid #c8c8c8;background:#fff"></div>
<svg class="a" style="left:885px;top:283px;" width="16" height="16" viewBox="0 0 16 16"><path d="M9,4 V12 M5,8 H13" stroke="#2a2a2a" stroke-width="1.9"/></svg>
<div class="a" style="left:317px;top:313px;width:584px;height:475px;border:1px solid #c8c8c8;background:#fff"></div>
<div class="t" style="left:322px;top:319px;font-size:12px;line-height:14px;color:#333;letter-spacing:0">Beispiel und Spieldatei - mit alten Angebotsvariablen - TestDateiSignaturen.docx<svg style="vertical-align:-1px;margin-left:5px" width="12" height="12" viewBox="0 0 12 12"><path d="M0.6,0.6 L11.4,11.4 M11.4,0.6 L0.6,11.4" stroke="#e0533a" stroke-width="1.3"/></svg></div>
<div class="t" style="left:322px;top:339px;font-size:12px;line-height:14px;color:#333;letter-spacing:0">c-Sign Modul.docx<svg style="vertical-align:-1px;margin-left:5px" width="12" height="12" viewBox="0 0 12 12"><path d="M0.6,0.6 L11.4,11.4 M11.4,0.6 L0.6,11.4" stroke="#e0533a" stroke-width="1.3"/></svg></div>
<div class="t" style="left:322px;top:359px;font-size:12px;line-height:14px;color:#333;letter-spacing:0">Deckblatt - Beleg-Ausleitung.docx<svg style="vertical-align:-1px;margin-left:5px" width="12" height="12" viewBox="0 0 12 12"><path d="M0.6,0.6 L11.4,11.4 M11.4,0.6 L0.6,11.4" stroke="#e0533a" stroke-width="1.3"/></svg></div>
<div class="t" style="left:322px;top:379px;font-size:12px;line-height:14px;color:#333;letter-spacing:0">Deckblatt - Einleitung (2).docx<svg style="vertical-align:-1px;margin-left:5px" width="12" height="12" viewBox="0 0 12 12"><path d="M0.6,0.6 L11.4,11.4 M11.4,0.6 L0.6,11.4" stroke="#e0533a" stroke-width="1.3"/></svg></div>
<div class="t" style="left:322px;top:399px;font-size:12px;line-height:14px;color:#333;letter-spacing:-0.13px">TICK135327 Deckblatt - Ausleitung 18.03.2024 - STM.docx<svg style="vertical-align:-1px;margin-left:5px" width="12" height="12" viewBox="0 0 12 12"><path d="M0.6,0.6 L11.4,11.4 M11.4,0.6 L0.6,11.4" stroke="#e0533a" stroke-width="1.3"/></svg></div>
<div class="t" style="left:322px;top:419px;font-size:12px;line-height:14px;color:#333;letter-spacing:0">UnterschriftDateiV4.docx<svg style="vertical-align:-1px;margin-left:5px" width="12" height="12" viewBox="0 0 12 12"><path d="M0.6,0.6 L11.4,11.4 M11.4,0.6 L0.6,11.4" stroke="#e0533a" stroke-width="1.3"/></svg></div>
<div class="a" style="left:941px;top:90px;width:656px;height:734px;border:1px solid #c8c8c8;background:#fff"></div>
<div class="a" style="left:942px;top:91px;width:654px;height:20px;background:#fafafa"></div>
<div class="a" style="left:942px;top:111px;width:654px;height:1px;background:#c8c8c8"></div>
<div class="t " style="left:953px;top:95px;font-size:12px;line-height:14px;color:#333;font-weight:normal;">Signierung</div>
<div class="a" style="left:953px;top:147px;width:632px;height:665px;border:1px solid #c8c8c8;background:#fff"></div>
<div class="a" style="left:953px;top:123px;width:69px;height:25px;border:1px solid #c8c8c8;border-bottom:none;background:#fff"></div>
<div class="a" style="left:954px;top:147px;width:67px;height:1px;background:#f0f0f0"></div>
<div class="t " style="left:965.5px;top:130px;font-size:12px;line-height:14px;color:#1a70d0;font-weight:normal;">Angebot</div>
<div class="t " style="left:1035px;top:130px;font-size:12px;line-height:14px;color:#333;font-weight:normal;">Auftrag</div>
<div class="t " style="left:1099.5px;top:130px;font-size:12px;line-height:14px;color:#333;letter-spacing:-0.2px;font-weight:normal;">Lieferschein</div>
<div class="t " style="left:1185px;top:130px;font-size:12px;line-height:14px;color:#333;font-weight:normal;">Abholschein</div>
<div class="t " style="left:1274px;top:130px;font-size:12px;line-height:14px;color:#333;letter-spacing:-0.15px;font-weight:normal;">Rechnung</div>
<div class="t " style="left:1351px;top:130px;font-size:12px;line-height:14px;color:#333;font-weight:normal;">Gutschrift</div>
<div class="t " style="left:1426px;top:130px;font-size:12px;line-height:14px;color:#333;font-weight:normal;">Vertrag</div>
<div class="t " style="left:966px;top:162px;font-size:12px;line-height:14px;color:#333;font-weight:normal;">Anrede</div>
<div class="t " style="left:970px;top:183px;font-size:12px;line-height:14px;color:#9a9a9a;font-weight:normal;">Anrede</div>
<div class="a" style="left:966px;top:199px;width:556px;height:1px;background:#c8c8c8"></div>
<svg class="a" style="left:1509.5px;top:187.5px;" width="9" height="5" viewBox="0 0 9 5"><polygon points="0.5,0.5 8.5,0.5 4.5,4.5" fill="#333"/></svg>
<div class="a" style="left:1526px;top:179px;width:21px;height:21px;border:1px solid #c4c4c4;background:#fbfbfb"></div>
<svg class="a" style="left:1526px;top:179px;" width="21" height="21" viewBox="0 0 21 21"><path d="M10.5,4 V17 M4,10.5 H17" stroke="#3f78b8" stroke-width="1.8"/></svg>
<div class="a" style="left:1551px;top:179px;width:21px;height:21px;border:1px solid #e6e6e6;background:#fbfbfb"></div>
<svg class="a" style="left:1551px;top:179px;" width="21" height="21" viewBox="0 0 21 21"><g opacity="0.45"><path d="M2.5,8.5 C5,4.5 8.5,3 11,3 C13.5,3 16.5,4.5 18.5,8.5 C16.5,12.5 13.5,13.5 11,13.5 C8.5,13.5 5,12.5 2.5,8.5 Z" fill="#f7931e"/>
<circle cx="11" cy="8.3" r="4.3" fill="#fff" stroke="#444" stroke-width="1.3"/><circle cx="11" cy="8.3" r="2.6" fill="#f7b26a"/><circle cx="11" cy="8.3" r="0.9" fill="#fff"/>
<path d="M8,11.5 L3.5,16" stroke="#444" stroke-width="2.2" stroke-linecap="round"/></g></svg>
<div class="t " style="left:966px;top:206px;font-size:12px;line-height:14px;color:#333;font-weight:normal;">Report</div>
<div class="t " style="left:970px;top:227px;font-size:12px;line-height:14px;color:#333;font-weight:normal;">Hybrid Kundenanlagen 22-1-9-SP (ConvertRTF aktiv)</div>
<div class="a" style="left:966px;top:243px;width:556px;height:1px;background:#c8c8c8"></div>
<svg class="a" style="left:1509.5px;top:231.5px;" width="9" height="5" viewBox="0 0 9 5"><polygon points="0.5,0.5 8.5,0.5 4.5,4.5" fill="#333"/></svg>
<div class="t " style="left:966px;top:250px;font-size:12px;line-height:14px;color:#333;font-weight:bold;letter-spacing:-0.3px;-webkit-text-stroke:0.25px #fff;">Signatur</div>
<div class="t " style="left:970px;top:271px;font-size:12px;line-height:14px;color:#333;font-weight:normal;">Beispiel und Spieldatei - mit alten Angebotsvariablen - TestDateiSignaturen.docx</div>
<div class="a" style="left:966px;top:287px;width:556px;height:1px;background:#f0860a"></div>
<svg class="a" style="left:1509.5px;top:275.5px;" width="9" height="5" viewBox="0 0 9 5"><polygon points="0.5,0.5 8.5,0.5 4.5,4.5" fill="#333"/></svg>
<div class="a" style="left:1526px;top:267px;width:21px;height:21px;border:1px solid #c4c4c4;background:#fbfbfb"></div>
<svg class="a" style="left:1526px;top:267px;" width="21" height="21" viewBox="0 0 21 21"><path d="M10.5,4 V17 M4,10.5 H17" stroke="#3f78b8" stroke-width="1.8"/></svg>
<div class="a" style="left:1551px;top:267px;width:21px;height:21px;border:1px solid #c4c4c4;background:#fbfbfb"></div>
<svg class="a" style="left:1551px;top:267px;" width="21" height="21" viewBox="0 0 21 21"><g opacity="1"><path d="M2.5,8.5 C5,4.5 8.5,3 11,3 C13.5,3 16.5,4.5 18.5,8.5 C16.5,12.5 13.5,13.5 11,13.5 C8.5,13.5 5,12.5 2.5,8.5 Z" fill="#f7931e"/>
<circle cx="11" cy="8.3" r="4.3" fill="#fff" stroke="#444" stroke-width="1.3"/><circle cx="11" cy="8.3" r="2.6" fill="#f7b26a"/><circle cx="11" cy="8.3" r="0.9" fill="#fff"/>
<path d="M8,11.5 L3.5,16" stroke="#444" stroke-width="2.2" stroke-linecap="round"/></g></svg>
<div class="t " style="left:966px;top:294px;font-size:12px;line-height:14px;color:#333;font-weight:normal;">Abrede</div>
<div class="t " style="left:970px;top:315px;font-size:12px;line-height:14px;color:#9a9a9a;font-weight:normal;">Abrede</div>
<div class="a" style="left:966px;top:331px;width:556px;height:1px;background:#c8c8c8"></div>
<svg class="a" style="left:1509.5px;top:319.5px;" width="9" height="5" viewBox="0 0 9 5"><polygon points="0.5,0.5 8.5,0.5 4.5,4.5" fill="#333"/></svg>
<div class="a" style="left:1526px;top:311px;width:21px;height:21px;border:1px solid #c4c4c4;background:#fbfbfb"></div>
<svg class="a" style="left:1526px;top:311px;" width="21" height="21" viewBox="0 0 21 21"><path d="M10.5,4 V17 M4,10.5 H17" stroke="#3f78b8" stroke-width="1.8"/></svg>
<div class="a" style="left:1551px;top:311px;width:21px;height:21px;border:1px solid #e6e6e6;background:#fbfbfb"></div>
<svg class="a" style="left:1551px;top:311px;" width="21" height="21" viewBox="0 0 21 21"><g opacity="0.45"><path d="M2.5,8.5 C5,4.5 8.5,3 11,3 C13.5,3 16.5,4.5 18.5,8.5 C16.5,12.5 13.5,13.5 11,13.5 C8.5,13.5 5,12.5 2.5,8.5 Z" fill="#f7931e"/>
<circle cx="11" cy="8.3" r="4.3" fill="#fff" stroke="#444" stroke-width="1.3"/><circle cx="11" cy="8.3" r="2.6" fill="#f7b26a"/><circle cx="11" cy="8.3" r="0.9" fill="#fff"/>
<path d="M8,11.5 L3.5,16" stroke="#444" stroke-width="2.2" stroke-linecap="round"/></g></svg>
<div class="t " style="left:966px;top:338px;font-size:12px;line-height:14px;color:#333;font-weight:normal;">Freigabe durch Mitarbeiter</div>
<div class="t " style="left:970px;top:359px;font-size:12px;line-height:14px;color:#9a9a9a;font-weight:normal;">Mitarbeiter auswählen</div>
<div class="a" style="left:966px;top:375px;width:606px;height:1px;background:#c8c8c8"></div>
<svg class="a" style="left:1559.5px;top:363.5px;" width="9" height="5" viewBox="0 0 9 5"><polygon points="0.5,0.5 8.5,0.5 4.5,4.5" fill="#333"/></svg>
<div class="t " style="left:966px;top:384px;font-size:12px;line-height:14px;color:#333;font-weight:normal;">Ablaufdatum (Erstelldatum + x Tage)</div>
<div class="t" style="left:1252px;width:300px;text-align:right;top:384px;font-size:12px;line-height:14px;color:#9a9a9a;letter-spacing:-0.15px">Wie viele Tage ab dem Erstelldatum?</div>
<div class="a" style="left:1163px;top:400px;width:409px;height:1px;background:#c8c8c8"></div>
<svg class="a" style="left:1559px;top:382px;" width="10" height="16" viewBox="0 0 10 16"><polygon points="1,5.5 9,5.5 5,1.5" fill="#333"/><polygon points="1,10.5 9,10.5 5,14.5" fill="#333"/></svg>
<div class="a" style="left:961px;top:404px;width:624px;height:412px;border:4px solid #f29b26;background:#fff;box-shadow:3px 3px 3px rgba(0,0,0,0.28);overflow:hidden">
<div class="a" style="left:590px;top:-3px;width:17px;height:411px;background:#fbfbfb"></div>
<div class="a" style="left:1px;top:-4px;width:589px;height:31px;background:#fff"></div>
<svg class="a" style="left:21px;top:8px" width="7" height="7" viewBox="0 0 7 7"><polygon points="6,0.5 6,6.5 0,6.5" fill="#333"/></svg>
<div class="t" style="left:32px;top:6px;font-size:12px;line-height:14px;color:#333;font-weight:bold;letter-spacing:-0.25px">Gruppe: Kunde</div>
<div class="a" style="left:31px;top:127px;width:559px;height:20px;background:#f5f8fb"></div>
<div class="t" style="left:36px;top:31px;font-size:12px;line-height:14px;color:#333;font-weight:normal;letter-spacing:-0.22px">@@BearbeiterTelefon3@@</div>
<div class="t" style="left:36px;top:51px;font-size:12px;line-height:14px;color:#333;font-weight:normal;letter-spacing:-0.22px">@@BearbeiterFax@@</div>
<div class="t" style="left:36px;top:71px;font-size:12px;line-height:14px;color:#333;font-weight:normal;letter-spacing:-0.22px">@@BearbeiterFax2@@</div>
<div class="t" style="left:36px;top:91px;font-size:12px;line-height:14px;color:#333;font-weight:normal;letter-spacing:-0.22px">@@BearbeiterFax3@@</div>
<div class="t" style="left:36px;top:111px;font-size:12px;line-height:14px;color:#333;font-weight:normal;letter-spacing:-0.22px">@@BearbeiterEMail@@</div>
<div class="t" style="left:36px;top:131px;font-size:12px;line-height:14px;color:#333;font-weight:normal;letter-spacing:-0.22px">@@BearbeiterEMail2@@</div>
<div class="t" style="left:36px;top:151px;font-size:12px;line-height:14px;color:#333;font-weight:normal;letter-spacing:-0.22px">@@BearbeiterEMail3@@</div>
<div class="a" style="left:1px;top:167px;width:589px;height:1px;background:#e2e2e2"></div>
<svg class="a" style="left:21px;top:179px" width="7" height="7" viewBox="0 0 7 7"><polygon points="6,0.5 6,6.5 0,6.5" fill="#333"/></svg>
<div class="t" style="left:32px;top:177px;font-size:12px;line-height:14px;color:#333;font-weight:bold;letter-spacing:-0.05px">Gruppe: Mitarbeiter</div>
<div class="a" style="left:1px;top:198px;width:589px;height:1px;background:#e2e2e2"></div>
<div class="t" style="left:36px;top:203px;font-size:12px;line-height:14px;color:#333;font-weight:normal;letter-spacing:-0.22px">@@MitarbeiterName@@</div>
<div class="t" style="left:36px;top:223px;font-size:12px;line-height:14px;color:#333;font-weight:normal;letter-spacing:-0.22px">@@MitarbeiterKurzzeichen@@</div>
<div class="t" style="left:36px;top:243px;font-size:12px;line-height:14px;color:#333;font-weight:normal;letter-spacing:-0.22px">@@MitarbeiterVorname@@</div>
<div class="t" style="left:36px;top:263px;font-size:12px;line-height:14px;color:#333;font-weight:normal;letter-spacing:-0.22px">@@MitarbeiterNachname@@</div>
<div class="a" style="left:1px;top:279px;width:589px;height:1px;background:#e2e2e2"></div>
<svg class="a" style="left:21px;top:291px" width="7" height="7" viewBox="0 0 7 7"><polygon points="6,0.5 6,6.5 0,6.5" fill="#333"/></svg>
<div class="t" style="left:32px;top:289px;font-size:12px;line-height:14px;color:#333;font-weight:bold;letter-spacing:-0.1px">Gruppe: Signierung</div>
<div class="a" style="left:1px;top:310px;width:589px;height:1px;background:#e2e2e2"></div>
<div class="t" style="left:36px;top:315px;font-size:12px;line-height:14px;color:#333;font-weight:normal;letter-spacing:-0.22px">@@BearbeiterUnterschrift@@</div>
<div class="t" style="left:36px;top:335px;font-size:12px;line-height:14px;color:#333;font-weight:normal;letter-spacing:-0.22px">@@BearbeiterUnterschriftKlartext@@</div>
<div class="t" style="left:36px;top:355px;font-size:12px;line-height:14px;color:#333;font-weight:normal;letter-spacing:-0.22px">@@Unterschrift@@</div>
<div class="t" style="left:36px;top:375px;font-size:12px;line-height:14px;color:#333;font-weight:normal;letter-spacing:-0.22px">@@UnterschriftDatum@@</div>
<div class="a" style="left:1px;top:27px;width:589px;height:6px;background:linear-gradient(#e6e6e6,rgba(255,255,255,0))"></div>
<div class="a" style="left:591px;top:-3px;width:15px;height:16px;border:1px solid #c8c8c8;background:#fff"></div>
<svg class="a" style="left:591px;top:0px" width="15" height="13" viewBox="0 0 15 13"><polygon points="3.5,8 11.5,8 7.5,4" fill="#333"/></svg>
<div class="a" style="left:591px;top:328px;width:15px;height:48px;border:1px solid #c8c8c8;background:#fff"></div>
<div class="a" style="left:591px;top:375px;width:15px;height:15px;border:1px solid #c8c8c8;background:#fff"></div>
<svg class="a" style="left:591px;top:375px" width="15" height="15" viewBox="0 0 15 15"><polygon points="3.5,6 11.5,6 7.5,10" fill="#333"/></svg>
<div class="a" style="left:0px;top:0px;width:616px;height:404px;box-shadow:inset 2px 2px 4px rgba(0,0,0,0.4)"></div>
</div>
</body></html>
